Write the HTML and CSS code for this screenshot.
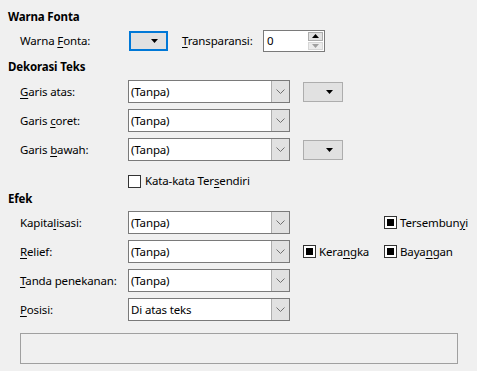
FILE: index.html
```html
<!DOCTYPE html>
<html>
<head>
<meta charset="utf-8">
<link rel="stylesheet" href="styles.css">
</head>
<body>
<div class="page">
  <div class="heading h-first">Warna Fonta</div>
  <div class="row-font">
    <span class="lbl lbl-font">Warna <u>F</u>onta:</span>
    <div class="colorbtn focused"><svg class="tri" width="7" height="4" viewBox="0 0 7 4"><path d="M0 0H7L3.5 4Z" fill="#000"/></svg></div>
    <span class="lbl lbl-trans"><u>T</u>ransparansi:</span>
    <div class="spin">
      <span class="spin-val">0</span>
      <div class="spin-btns">
        <div class="spin-up"><svg width="7" height="4" viewBox="0 0 7 4"><path d="M0 4H7L3.5 0Z" fill="#000"/></svg></div>
        <div class="spin-down"><svg width="7" height="4" viewBox="0 0 7 4"><path d="M0 0H7L3.5 4Z" fill="#a0a0a0"/></svg></div>
      </div>
    </div>
  </div>

  <div class="heading h-deco">Dekorasi Teks</div>
  <div class="grid">
    <span class="lbl"><u>G</u>aris atas:</span>
    <div class="combo"><span class="combo-val">(Tanpa)</span><div class="combo-btn"><svg width="9" height="5" viewBox="0 0 9 5"><path d="M0.5 0.5L4.5 4.5L8.5 0.5" fill="none" stroke="#707070" stroke-width="1"/></svg></div></div>
    <div class="colorbtn"><svg class="tri" width="7" height="4" viewBox="0 0 7 4"><path d="M0 0H7L3.5 4Z" fill="#000"/></svg></div>
    <span></span>

    <span class="lbl">Garis <u>c</u>oret:</span>
    <div class="combo"><span class="combo-val">(Tanpa)</span><div class="combo-btn"><svg width="9" height="5" viewBox="0 0 9 5"><path d="M0.5 0.5L4.5 4.5L8.5 0.5" fill="none" stroke="#707070" stroke-width="1"/></svg></div></div>
    <span></span>
    <span></span>

    <span class="lbl">Garis <u>b</u>awah:</span>
    <div class="combo"><span class="combo-val">(Tanpa)</span><div class="combo-btn"><svg width="9" height="5" viewBox="0 0 9 5"><path d="M0.5 0.5L4.5 4.5L8.5 0.5" fill="none" stroke="#707070" stroke-width="1"/></svg></div></div>
    <div class="colorbtn"><svg class="tri" width="7" height="4" viewBox="0 0 7 4"><path d="M0 0H7L3.5 4Z" fill="#000"/></svg></div>
    <span></span>
  </div>

  <div class="check-row">
    <span class="check"></span>
    <span class="lbl">Kata-kata Ter<u>s</u>endiri</span>
  </div>

  <div class="heading h-efek">Efek</div>
  <div class="grid grid-efek">
    <span class="lbl">Kapita<u>l</u>isasi:</span>
    <div class="combo"><span class="combo-val">(Tanpa)</span><div class="combo-btn"><svg width="9" height="5" viewBox="0 0 9 5"><path d="M0.5 0.5L4.5 4.5L8.5 0.5" fill="none" stroke="#707070" stroke-width="1"/></svg></div></div>
    <span></span>
    <div class="checkitem"><span class="check checked"></span><span class="lbl">Tersembun<u>y</u>i</span></div>

    <span class="lbl"><u>R</u>elief:</span>
    <div class="combo"><span class="combo-val">(Tanpa)</span><div class="combo-btn"><svg width="9" height="5" viewBox="0 0 9 5"><path d="M0.5 0.5L4.5 4.5L8.5 0.5" fill="none" stroke="#707070" stroke-width="1"/></svg></div></div>
    <div class="checkitem"><span class="check checked"></span><span class="lbl">Kera<u>n</u>gka</span></div>
    <div class="checkitem"><span class="check checked"></span><span class="lbl">Baya<u>n</u>gan</span></div>

    <span class="lbl"><u>T</u>anda penekanan:</span>
    <div class="combo"><span class="combo-val">(Tanpa)</span><div class="combo-btn"><svg width="9" height="5" viewBox="0 0 9 5"><path d="M0.5 0.5L4.5 4.5L8.5 0.5" fill="none" stroke="#707070" stroke-width="1"/></svg></div></div>
    <span></span>
    <span></span>

    <span class="lbl"><u>P</u>osisi:</span>
    <div class="combo"><span class="combo-val">Di atas teks</span><div class="combo-btn"><svg width="9" height="5" viewBox="0 0 9 5"><path d="M0.5 0.5L4.5 4.5L8.5 0.5" fill="none" stroke="#707070" stroke-width="1"/></svg></div></div>
    <span></span>
    <span></span>
  </div>

  <div class="preview"></div>
</div>
</body>
</html>
```

FILE: styles.css
```css
html, body {
  margin: 0;
  padding: 0;
  background: #f0f0f0;
}
body {
  font-family: "Noto Sans", "Open Sans", sans-serif;
  font-size: 11.5px;
  letter-spacing: -0.15px;
  color: #000;
  width: 477px;
  height: 371px;
  overflow: hidden;
}
.page {
  padding-top: 9px;
}
u {
  text-decoration-thickness: 1px;
  text-underline-offset: 2px;
}
.heading {
  font-weight: bold;
  line-height: 16px;
  height: 16px;
  padding-left: 8px;
}
.lbl {
  line-height: 16px;
  white-space: nowrap;
}
.row-font {
  display: flex;
  align-items: center;
  height: 22px;
  margin-top: 5px;
  padding-left: 20px;
}
.lbl-font {
  width: 109px;
}
.lbl-trans {
  width: 81px;
}
.colorbtn {
  box-sizing: border-box;
  width: 40px;
  height: 20px;
  background: #e1e1e1;
  border: 1px solid #adadad;
  display: flex;
  align-items: center;
  justify-content: flex-end;
  padding-right: 9px;
}
.colorbtn.focused {
  width: 39px;
  border: 2px solid #0078d7;
  margin-right: 14px;
  padding-right: 8px;
}
.tri {
  display: block;
}
.spin {
  box-sizing: border-box;
  width: 62px;
  height: 22px;
  background: #fff;
  border: 1px solid #7a7a7a;
  display: flex;
  align-items: center;
  justify-content: space-between;
  padding: 1px 1px 1px 3px;
}
.spin-val {
  line-height: 16px;
}
.spin-btns {
  display: flex;
  flex-direction: column;
  gap: 1px;
  width: 15px;
  height: 18px;
}
.spin-up, .spin-down {
  flex: 1;
  box-sizing: border-box;
  display: flex;
  align-items: center;
  justify-content: center;
}
.spin-up {
  border: 1px solid #adadad;
  background: #e1e1e1;
}
.spin-down {
  background: #ececec;
  border: 1px solid #d6d6d6;
}
.h-deco {
  margin-top: 7px;
}
.grid {
  display: grid;
  grid-template-columns: 108px 175px 81px auto;
  grid-auto-rows: 23px;
  row-gap: 6px;
  align-items: center;
  padding-left: 20px;
  margin-top: 5px;
}
.combo {
  box-sizing: border-box;
  width: 162px;
  height: 23px;
  background: #fff;
  border: 1px solid #7a7a7a;
  display: flex;
  align-items: stretch;
}
.combo-val {
  flex: 1;
  line-height: 21px;
  padding-left: 2px;
  white-space: nowrap;
}
.combo-btn {
  box-sizing: border-box;
  width: 18px;
  background: #e1e1e1;
  border-left: 1px solid #adadad;
  display: flex;
  align-items: center;
  justify-content: center;
}
.check-row {
  display: flex;
  align-items: center;
  gap: 4px;
  height: 16px;
  margin-top: 12px;
  padding-left: 128px;
}
.check {
  box-sizing: border-box;
  width: 13px;
  height: 13px;
  background: #fff;
  border: 1px solid #333;
  flex: none;
  display: flex;
  align-items: center;
  justify-content: center;
}
.check.checked::after {
  content: "";
  width: 7px;
  height: 7px;
  background: #000;
}
.h-efek {
  margin-top: 2px;
}
.grid-efek {
  margin-top: 4px;
}
.checkitem {
  display: flex;
  align-items: center;
  gap: 3px;
}
.preview {
  box-sizing: border-box;
  margin: 12px 0 0 20px;
  width: 438px;
  height: 31px;
  border: 1px solid #a0a0a0;
}
```
